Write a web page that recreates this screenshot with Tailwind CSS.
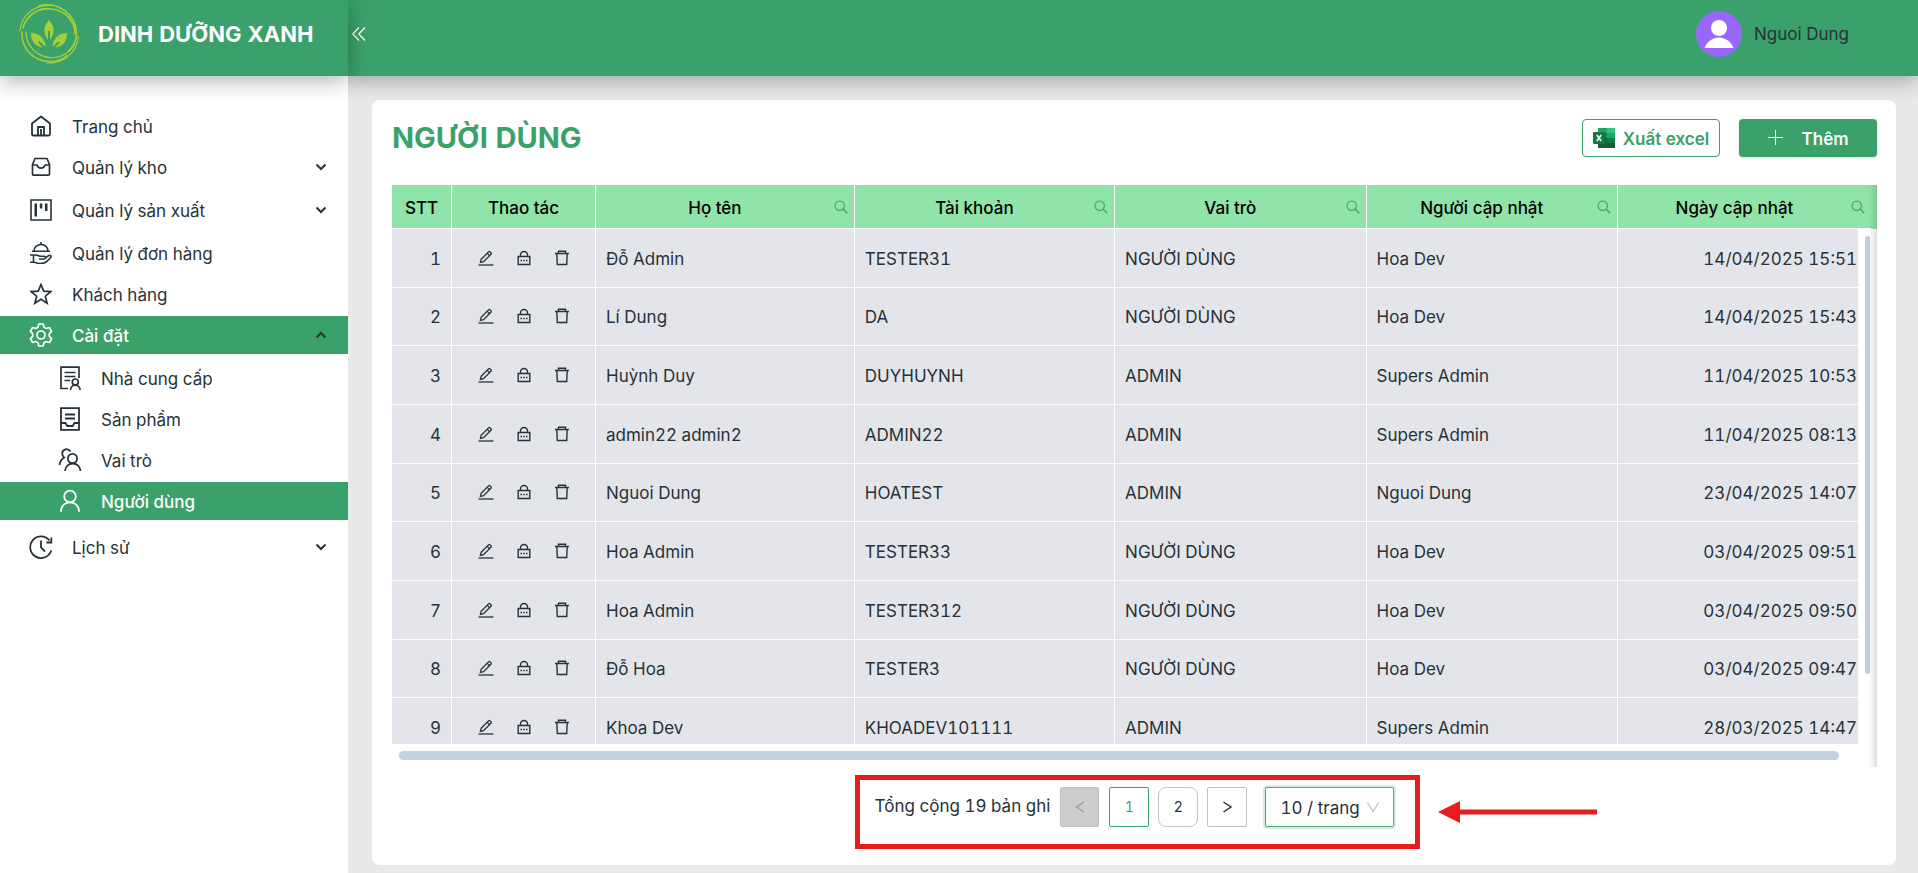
<!DOCTYPE html>
<html lang="vi">
<head>
<meta charset="utf-8">
<meta name="viewport" content="width=device-width, initial-scale=1">
<title>Dinh Dưỡng Xanh - Người dùng</title>
<script src="https://cdn.jsdelivr.net/npm/@tailwindcss/browser@4"></script>
</head>
<body class="flex h-screen overflow-hidden bg-[#e9e9e9] font-['Inter','Noto_Sans',sans-serif] text-[17px] leading-[26px] text-[#263238] tabular-nums">

<svg class="hidden" aria-hidden="true">
  <symbol id="down" viewBox="0 0 12 12"><path d="M1.500 3.500 6 8l4.500-4.500" fill="none" stroke="currentColor" stroke-width="2"/></symbol>
  <symbol id="search" viewBox="0 0 14 14"><circle cx="5.700" cy="5.700" r="4.700" fill="none" stroke="currentColor" stroke-width="1.100"/><path d="m9 9 4.300 4.300" stroke="currentColor" stroke-width="1.300"/></symbol>
  <symbol id="edit" viewBox="0 0 16 16"><g fill="none" stroke="currentColor" stroke-width="1.300"><path d="M.5 15h15"/><path d="m3.200 9.200 7.300-7.300q.8-.8 1.600 0l.8.8q.8.800 0 1.600L5.600 11.600l-3.200.8z"/><path d="m9.200 3.300 2.300 2.300"/></g></symbol>
  <symbol id="lock" viewBox="0 0 16 16"><g fill="none" stroke="currentColor" stroke-width="1.400"><path d="M2.200 6.500h11.600v8H2.200z"/><path d="M4.500 6.500V5a3.500 3.500 0 0 1 7 0v1.500"/></g><path d="M4.500 9.800H6v1.500H4.500zM7.300 9.800h1.500v1.500H7.300zM10 9.800h1.500v1.500H10z" fill="currentColor"/></symbol>
  <symbol id="trash" viewBox="0 0 16 16"><path d="M1 3.500h14M4.500 3.500V1.200h7v2.300M2.800 3.500l.5 11h9.400l.5-11" fill="none" stroke="currentColor" stroke-width="1.400"/></symbol>
</svg>

<aside class="z-20 flex w-[348px] shrink-0 flex-col bg-white">
  <div class="flex h-[76px] shrink-0 items-center bg-[#3aa16a] pb-2 pl-[18px] shadow-[0_5px_20px_rgba(0,0,0,0.3)]">
    <svg class="size-[62px] shrink-0" viewBox="0 0 62 62" fill="none" stroke="#a6ce39" stroke-linecap="round" role="img" aria-label="Logo">
      <path d="M2 28C3 12 17 1 34 2.500" stroke-width="1.200"/>
      <path d="M5 25C9 11 22 4 34 6c14 2 23 12 23 25" stroke-width="1.600"/>
      <path d="M21 3C38-2 58 10 58.500 30c0 7-3 14-8 18" stroke-width="1.600"/>
      <path d="M60.500 33C59 50 45 61 29 60" stroke-width="1.200"/>
      <path d="M4 29c-1 16 11 29 27 29.500 8 0 14-2 18-6" stroke-width="1.600"/>
      <path d="M8 29c0 12 8 22 20 25 12 3 24-3 29-14" stroke-width="1.300"/>
      <g fill="#a6ce39" stroke="none">
        <path d="M31 17c6 7 6 13 1 20v-9h-2v9c-5-7-5-13 1-20z"/>
        <path d="M13 30c8 0 13 4 15 14l-7-6-1 1.500 5 5c-8-1-12-6-12-14.500z"/>
        <path d="M49 30c-8 0-13 4-15 14l7-6 1 1.500-5 5c8-1 12-6 12-14.500z"/>
      </g>
    </svg>
    <span class="ml-[18px] whitespace-nowrap text-[22px] font-bold text-white">DINH DƯỠNG XANH</span>
  </div>

  <nav class="pt-[31px]">
    <a href="#" class="flex h-[38px] items-center pl-[30px]">
      <svg class="size-[22px]" viewBox="0 0 22 22" fill="none" stroke="currentColor" stroke-width="1.800"><path d="M2 8.500 11 1.500l9 7V19q0 1.500-1.500 1.500h-15Q2 20.500 2 19z" stroke-linejoin="round"/><path d="M8 20.500V12h6v8.500M11 14v6"/></svg>
      <span class="ml-5 pt-0.5">Trang chủ</span>
    </a>
    <a href="#" class="mt-[3px] flex h-[38px] items-center pl-[30px]">
      <svg class="size-[22px]" viewBox="0 0 22 22" fill="none" stroke="currentColor" stroke-width="1.700" stroke-linejoin="round"><path d="M5 2.500h12l2.500 6V18q0 1.200-1.200 1.200H3.700Q2.500 19.200 2.500 18V8.500z"/><path d="M2.500 9H7q1 3.200 4 3.200T15 9h4.500"/></svg>
      <span class="ml-5 pt-0.5">Quản lý kho</span>
      <svg class="mr-[21px] ml-auto size-3"><use href="#down"/></svg>
    </a>
    <a href="#" class="mt-[5px] flex h-[38px] items-center pl-[30px]">
      <svg class="size-[22px]" viewBox="0 0 22 22"><path d="M1 1h20v20H1z" fill="none" stroke="currentColor" stroke-width="1.600"/><path d="M4.500 4.500H7v13H4.500zM9.800 4.500h2.400v5H9.800zM15 4.500h2.500v7.500H15z" fill="currentColor"/></svg>
      <span class="ml-5 pt-0.5">Quản lý sản xuất</span>
      <svg class="mr-[21px] ml-auto size-3"><use href="#down"/></svg>
    </a>
    <a href="#" class="mt-[5px] flex h-[38px] items-center pl-[30px]">
      <svg class="size-[22px]" viewBox="0 0 22 22" fill="none" stroke="currentColor" stroke-width="1.600"><path d="M2 9.300h18M4 9a7 6.500 0 0 1 14 0M11 2.500V0M0 13h5.500c3 0 3 1.200 5 1.200H14c2 0 2 2.800 0 2.800H9M3.500 13v7M0 20.300h3.500c3 0 4 1.200 7 1.200 5 0 7-2.500 10.200-6 1-1.500-.7-2.800-2-1.800L15 16.200"/></svg>
      <span class="ml-5 pt-0.5">Quản lý đơn hàng</span>
    </a>
    <a href="#" class="mt-[3px] flex h-[38px] items-center pl-[30px]">
      <svg class="size-[22px]" viewBox="0 0 22 22" fill="none" stroke="currentColor" stroke-width="1.700"><path d="m11 1.500 2.700 6.600 7.100.5-5.500 4.600 1.800 7L11 16.300l-6.100 3.900 1.800-7L1.200 8.600l7.100-.5z"/></svg>
      <span class="ml-5 pt-0.5">Khách hàng</span>
    </a>
    <a href="#" class="mt-[3px] flex h-[38px] items-center bg-[#3aa16a] pl-[29px] text-white">
      <svg class="size-6" viewBox="0 0 24 24" fill="none" stroke="currentColor" stroke-width="1.700" stroke-linejoin="round"><circle cx="12" cy="12" r="4"/><path d="M9.800 1h4.400l.8 3.200 2.200 1.300 3.200-1L22.600 8.300l-2.300 2.400v2.600l2.300 2.400-2.200 3.800-3.200-1-2.200 1.300-.8 3.200H9.800L9 19.800l-2.200-1.300-3.200 1-2.200-3.800 2.300-2.400v-2.600L1.400 8.300l2.200-3.800 3.200 1L9 4.200z"/></svg>
      <span class="ml-[19px] pt-0.5 font-medium">Cài đặt</span>
      <svg class="mr-[21px] ml-auto size-3 rotate-180 text-[#263238]"><use href="#down"/></svg>
    </a>
    <a href="#" class="mt-[5px] flex h-[38px] items-center pl-[58px]">
      <svg class="size-6" viewBox="0 0 24 24" fill="none" stroke="currentColor" stroke-width="1.700"><path d="M10 22.500H3V1.200h18v11M6.500 6.500h11M6.500 10.500h11M6.500 14.500H12"/><circle cx="17.300" cy="16" r="3"/><path d="M12.500 24c0-6.500 9.600-6.500 9.600 0"/></svg>
      <span class="ml-[19px] pt-0.5">Nhà cung cấp</span>
    </a>
    <a href="#" class="mt-[3px] flex h-[38px] items-center pl-[58px]">
      <svg class="size-6" viewBox="0 0 24 24" fill="none" stroke="currentColor" stroke-width="1.800"><path d="M3 1.200h18v21.600H3zM7 7.500h10M7 11.500h10M3 16h4.500l1.800 3h5.400l1.800-3H21"/></svg>
      <span class="ml-[19px] pt-0.5">Sản phẩm</span>
    </a>
    <a href="#" class="mt-[3px] flex h-[38px] items-center pl-[58px]">
      <svg class="size-6" viewBox="0 0 24 24" fill="none" stroke="currentColor" stroke-width="1.800"><circle cx="14.500" cy="10.500" r="4.600"/><path d="M7 23c.5-10 15-10 15.500 0M12.500 3.500C10-.5 4.200 1 4.200 5.600c0 1.700.8 3 2 4C3.500 11.200 2 13.500 1.500 17"/></svg>
      <span class="ml-[19px] pt-0.5">Vai trò</span>
    </a>
    <a href="#" aria-current="page" class="mt-[3px] flex h-[38px] items-center bg-[#3aa16a] pl-[58px] text-white">
      <svg class="size-6" viewBox="0 0 24 24" fill="none" stroke="currentColor" stroke-width="1.800"><circle cx="12" cy="7.500" r="5.800"/><path d="M3 22.800c0-12.600 18-12.600 18 0"/></svg>
      <span class="ml-[19px] pt-0.5 font-medium">Người dùng</span>
    </a>
    <a href="#" class="mt-2 flex h-[38px] items-center pl-[29px]">
      <svg class="size-6" viewBox="0 0 24 24" fill="none" stroke="currentColor" stroke-width="1.800"><path d="M22.300 15.500A10.800 10.800 0 1 1 20.500 5.500M22.300 2.500v5h-5M12 5.500v7l4 4"/></svg>
      <span class="ml-[19px] pt-0.5">Lịch sử</span>
      <svg class="mr-[21px] ml-auto size-3"><use href="#down"/></svg>
    </a>
  </nav>
</aside>

<div class="flex min-w-0 flex-1 flex-col">
  <header class="z-10 flex h-[76px] shrink-0 items-center bg-[#3aa16a] pr-[69px] pb-2 pl-1 shadow-[0_5px_20px_rgba(0,0,0,0.3)]">
    <button type="button" aria-label="Thu gọn menu" class="text-white">
      <svg class="size-[14px]" viewBox="0 0 14 14" fill="none" stroke="currentColor" stroke-width="1.300"><path d="M7 .5.8 7 7 13.500M13 .5 6.800 7l6.200 6.500"/></svg>
    </button>
    <button type="button" class="ml-auto flex items-center gap-3">
      <svg class="size-[46px]" viewBox="0 0 46 46"><circle cx="23" cy="23" r="23" fill="#9966ff"/><circle cx="23" cy="17" r="8" fill="#fff"/><path d="M8.500 37C14 23 32 23 37.500 37z" fill="#fff"/></svg>
      <span>Nguoi Dung</span>
    </button>
  </header>

  <main class="mt-6 mr-[22px] mb-2 ml-6 flex flex-1 flex-col rounded-lg bg-white pr-[19px] pl-5">
    <div class="flex h-[85px] items-center pb-[9px]">
      <h1 class="mr-auto text-[29px] font-bold text-[#3aa16a]">NGƯỜI DÙNG</h1>
      <button type="button" class="flex h-[38px] w-[138px] items-center justify-center gap-2 rounded border border-[#3aa16a] font-semibold whitespace-nowrap text-[#3aa16a]">
        <svg class="size-[22px] shrink-0" viewBox="0 0 22 22"><path d="M5 1h17v20H5z" fill="#185c37"/><path d="M5 1h8.500v5H5z" fill="#21a366"/><path d="M13.500 1H22v5h-8.500z" fill="#33c481"/><path d="M5 6h8.500v5H5z" fill="#107c41"/><path d="M13.500 6H22v5h-8.500z" fill="#21a366"/><path d="M13.500 11H22v5h-8.500z" fill="#107c41"/><rect y="5" width="12" height="12" rx="1" fill="#107c41"/><path d="m3.800 8 4.400 6M8.200 8l-4.400 6" stroke="#fff" stroke-width="1.600"/></svg>
        <span class="pt-0.5">Xuất excel</span>
      </button>
      <button type="button" class="ml-[19px] flex h-[38px] w-[138px] items-center justify-center gap-[18px] rounded bg-[#3aa16a] font-semibold text-white shadow-sm">
        <svg class="size-4" viewBox="0 0 16 16"><path d="M7.500 0v15M0 7.500h15" stroke="currentColor" stroke-width="1"/></svg>
        <span class="pt-0.5">Thêm</span>
      </button>
    </div>

    <div class="relative pb-[23px]">
      <div class="overflow-hidden bg-[#91e4a9]">
        <table id="head" class="w-[calc(100%-6px)] table-fixed border-separate border-spacing-0 font-medium text-black">
          <thead></thead>
        </table>
      </div>
      <div class="mr-[19px] h-[515px] overflow-hidden">
        <table id="body" class="h-[528px] w-[calc(100%+13px)] table-fixed border-separate border-spacing-0" aria-label="Danh sách người dùng">
          <tbody></tbody>
        </table>
      </div>
      <div class="absolute top-[51px] right-[7px] bottom-[93px] w-[5px] rounded-full bg-[#c4d1df]"></div>
      <div class="absolute right-[38px] bottom-[7px] left-[7px] h-[9px] rounded-full bg-[#c4d1df]"></div>
      <div class="pointer-events-none absolute inset-y-0 right-0 w-8 shadow-[inset_-10px_0_8px_-8px_rgba(0,0,0,0.2)]"></div>
    </div>

    <div class="flex justify-center pt-5">
      <div class="relative flex">
        <span class="mr-[10px] leading-[38px]">Tổng cộng 19 bản ghi</span>
        <button type="button" disabled aria-label="Trang trước" class="mr-[10px] flex h-10 w-[39px] items-center justify-center rounded-xs border border-[#bfbfbf] bg-[#cccccc] text-[#999999]">
          <svg class="size-3" viewBox="0 0 12 12"><path d="M10 1 2.500 6l7.500 5" fill="none" stroke="currentColor" stroke-width="1.200"/></svg>
        </button>
        <button type="button" aria-current="page" class="mr-[9px] size-10 rounded-xs border border-[#3aa16a] text-sm text-[#3aa16a]">1</button>
        <button type="button" class="mr-[9px] size-10 rounded-lg border border-[#c4c4cc] text-sm">2</button>
        <button type="button" aria-label="Trang sau" class="flex size-10 items-center justify-center rounded-xs border border-[#bfbfc4]">
          <svg class="size-3" viewBox="0 0 12 12"><path d="M2.500 1 10 6l-7.500 5" fill="none" stroke="currentColor" stroke-width="1.500"/></svg>
        </button>
        <div class="relative ml-[18px]">
          <select aria-label="Số bản ghi mỗi trang" class="h-10 w-[129px] appearance-none rounded-xs border border-[#4cab78] bg-white pt-0.5 pl-[14px] shadow-[0_0_0_2px_rgba(58,161,106,0.2)]">
            <option>10 / trang</option><option>20 / trang</option><option>50 / trang</option>
          </select>
          <svg class="pointer-events-none absolute top-[14px] right-[15px] size-3 text-[#bfbfbf]" viewBox="0 0 12 12"><path d="m.5 1.500 5.500 9 5.500-9" fill="none" stroke="currentColor" stroke-width="1.200"/></svg>
        </div>
        <div class="pointer-events-none absolute -top-3 -right-[26px] -bottom-[22px] -left-5 border-5 border-[#e81c1c]"></div>
        <svg class="pointer-events-none absolute top-[14px] left-full ml-11 h-[22px] w-[159px]" viewBox="0 0 159 22" fill="#e81c1c"><path d="M0 11 22 0v8.500h137v5H22V22z"/></svg>
      </div>
    </div>
  </main>
</div>

<script>
  const cols = `<colgroup><col class="w-[60px]"><col class="w-[144px]"><col class="w-[17.5%]"><col class="w-[17.6%]"><col class="w-[17%]"><col class="w-[17%]"><col></colgroup>`;
  const heads = ['STT', 'Thao tác', 'Họ tên', 'Tài khoản', 'Vai trò', 'Người cập nhật', 'Ngày cập nhật'];
  const rows = [
    ['Đỗ Admin', 'TESTER31', 'NGƯỜI DÙNG', 'Hoa Dev', '14/04/2025 15:51'],
    ['Lí Dung', 'DA', 'NGƯỜI DÙNG', 'Hoa Dev', '14/04/2025 15:43'],
    ['Huỳnh Duy', 'DUYHUYNH', 'ADMIN', 'Supers Admin', '11/04/2025 10:53'],
    ['admin22 admin2', 'ADMIN22', 'ADMIN', 'Supers Admin', '11/04/2025 08:13'],
    ['Nguoi Dung', 'HOATEST', 'ADMIN', 'Nguoi Dung', '23/04/2025 14:07'],
    ['Hoa Admin', 'TESTER33', 'NGƯỜI DÙNG', 'Hoa Dev', '03/04/2025 09:51'],
    ['Hoa Admin', 'TESTER312', 'NGƯỜI DÙNG', 'Hoa Dev', '03/04/2025 09:50'],
    ['Đỗ Hoa', 'TESTER3', 'NGƯỜI DÙNG', 'Hoa Dev', '03/04/2025 09:47'],
    ['Khoa Dev', 'KHOADEV101111', 'ADMIN', 'Supers Admin', '28/03/2025 14:47'],
  ];
  const cell = 'border-r border-b border-white bg-[#e4e5eb] whitespace-nowrap';
  const action = (icon, label) => `<button type="button" aria-label="${label}"><svg class="size-4"><use href="#${icon}"/></svg></button>`;

  document.querySelector('#head thead').innerHTML = '<tr>' + heads.map((h, i) => i < 2
    ? `<th scope="col" class="h-11 border-r border-b border-white pt-0.5 font-medium">${h}</th>`
    : `<th scope="col" class="h-11 ${i < 6 ? 'border-r' : ''} border-b border-white font-medium"><div class="flex items-center pr-[6px]"><span class="flex-1 pt-0.5">${h}</span><button type="button" aria-label="Tìm ${h}" class="text-[#3aa16a]"><svg class="size-[14px]"><use href="#search"/></svg></button></div></th>`
  ).join('') + '</tr>';
  document.querySelector('#head').insertAdjacentHTML('afterbegin', cols);

  document.querySelector('#body tbody').innerHTML = rows.map((r, i) => `<tr>
    <td class="${cell} px-[10px] pt-0.5 text-right">${i + 1}</td>
    <td class="${cell} px-[10px]"><div class="flex justify-center gap-[22px]">${action('edit', 'Sửa')}${action('lock', 'Mật khẩu')}${action('trash', 'Xóa')}</div></td>
    ${r.map((v, j) => `<td class="${cell} pt-0.5 ${j === 4 ? 'pr-[13px] text-right' : 'px-[10px]'}">${v}</td>`).join('')}</tr>`).join('');
  document.querySelector('#body').insertAdjacentHTML('afterbegin', cols);
</script>
</body>
</html>
